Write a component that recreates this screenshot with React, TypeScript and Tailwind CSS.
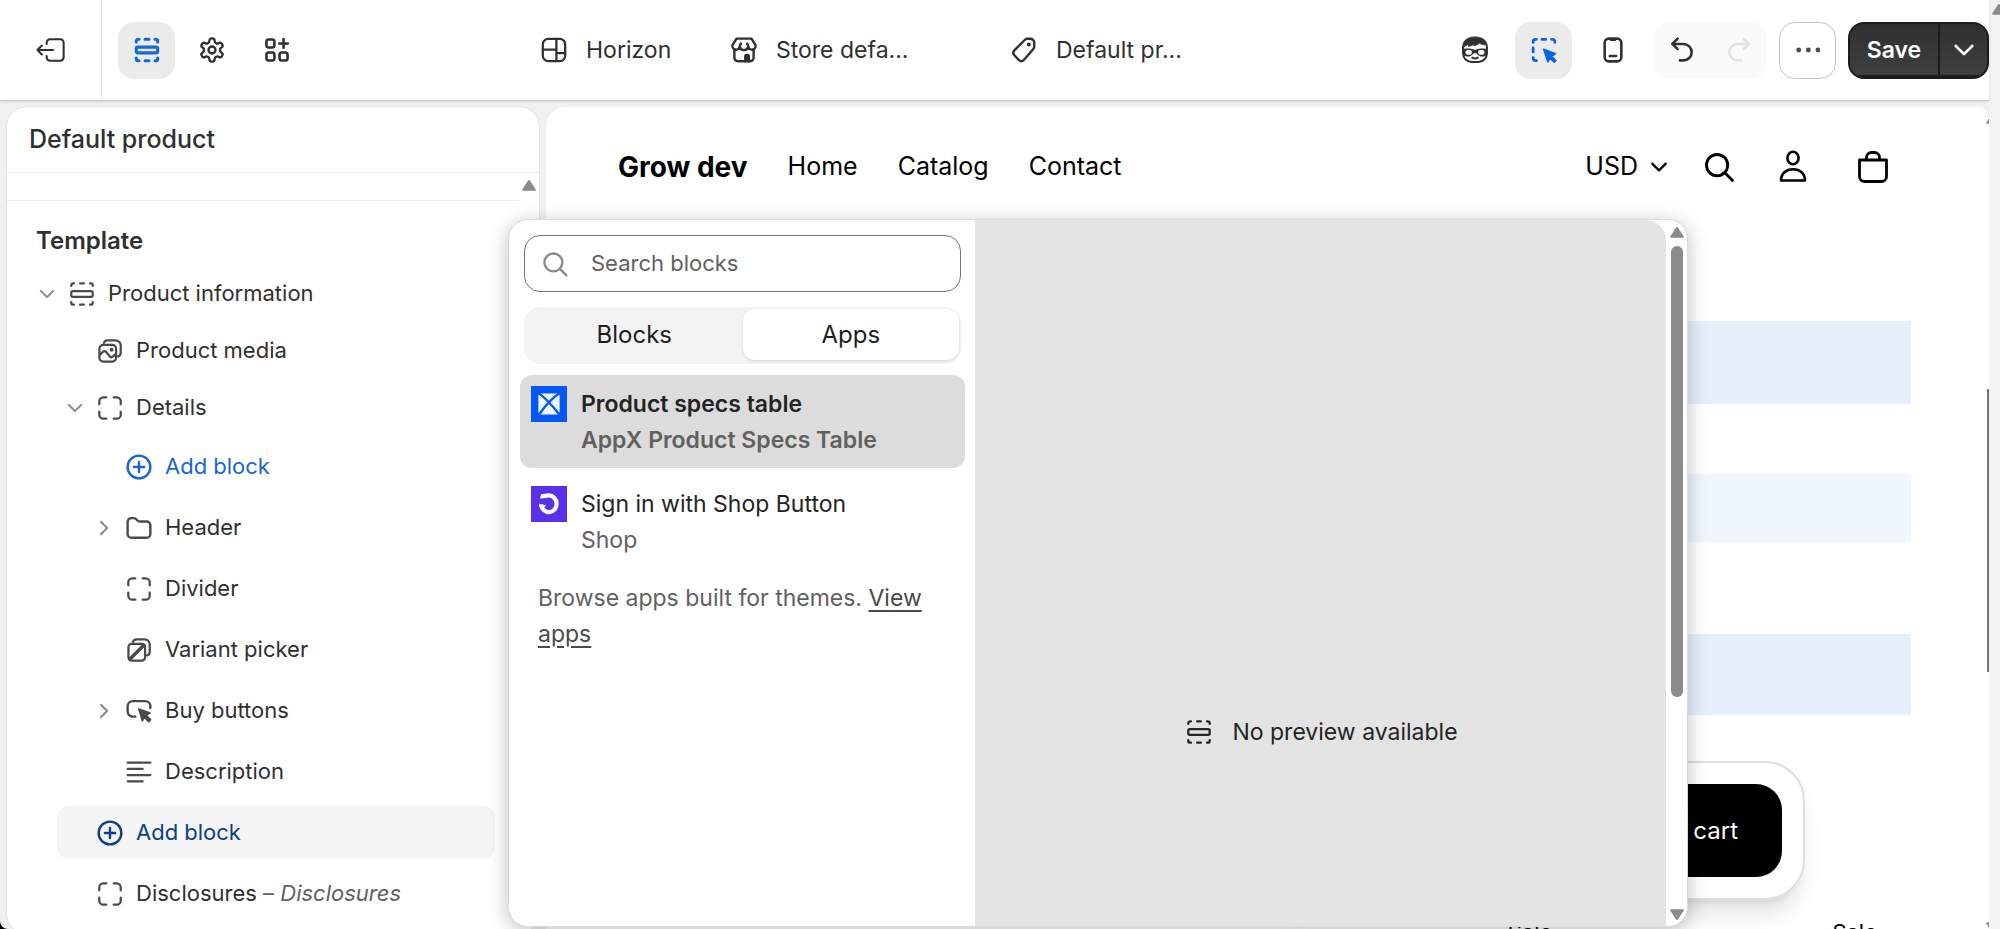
import { ReactNode, useState } from "react"
import clsx from "clsx"

type IconProps = { className?: string, children: ReactNode, width?: number }

function Icon({ className = "size-8", children, width = 1.5 }: IconProps) {
  return <svg viewBox="0 0 20 20" fill="none" stroke="currentColor" strokeWidth={width} strokeLinecap="round" strokeLinejoin="round" aria-hidden="true"
    className={clsx("shrink-0", className)}>{children}</svg>
}

const SectionIcon = ({ className, width }: { className?: string, width?: number }) => <Icon className={className} width={width}>
  <path d="M3.3 5v-.4a1.3 1.3 0 0 1 1.3-1.3H5M8.8 3.3h2.4M15 3.3h.4a1.3 1.3 0 0 1 1.3 1.3V5M3.3 15v.4a1.3 1.3 0 0 0 1.3 1.3H5M8.8 16.7h2.4M15 16.7h.4a1.3 1.3 0 0 0 1.3-1.3V15" />
  <rect x="3.3" y="8.2" width="13.4" height="3.6" rx="1" />
</Icon>

const BlockIcon = () => <Icon width={1.4}>
  <path d="M3.3 7.7V5.8a2.5 2.5 0 0 1 2.5-2.5h1.9M12.3 3.3h1.9a2.5 2.5 0 0 1 2.5 2.5v1.9M16.7 12.3v1.9a2.5 2.5 0 0 1-2.5 2.5h-1.9M7.7 16.7H5.8a2.5 2.5 0 0 1-2.5-2.5v-1.9" />
</Icon>

const PlusIcon = () => <Icon>
  <circle cx="10" cy="10" r="7.1" />
  <path d="M10 6.8v6.4M6.8 10h6.4" />
</Icon>

const MediaIcon = () => <Icon width={1.4}>
  <path d="M6.2 4.9a2.4 2.4 0 0 1 2.2-1.6h5a3.3 3.3 0 0 1 3.3 3.3v4.5c0 1.2-.6 2-1.6 2.3" />
  <rect x="3.4" y="6.2" width="10.4" height="10.4" rx="2.4" />
  <path d="m3.8 12.3 1.8-1.8c.6-.6 1.3-.6 1.8 0l2.6 3c.5.5 1.1.5 1.7 0l1.8-1.5" />
  <circle cx="11" cy="9.2" r=".5" fill="currentColor" />
</Icon>

const VariantIcon = () => <Icon width={1.4}>
  <path d="M6.2 4.9a2.4 2.4 0 0 1 2.2-1.6h5a3.3 3.3 0 0 1 3.3 3.3v4.5c0 1.2-.6 2-1.6 2.3" />
  <rect x="3.4" y="6.2" width="10.4" height="10.4" rx="2" />
  <path d="M4.4 15.6 13 7" strokeWidth="2.2" />
</Icon>

const FolderIcon = () => <Icon>
  <path d="M2.9 6.2A2.4 2.4 0 0 1 5.3 3.8h1.5c.6 0 1.1.2 1.5.7l.7.8c.4.4.9.6 1.4.6h4.3a2.4 2.4 0 0 1 2.4 2.4v5.4a2.4 2.4 0 0 1-2.4 2.4H5.3a2.4 2.4 0 0 1-2.4-2.4z" />
</Icon>

const ButtonIcon = () => <Icon>
  <path d="M7.7 13.5H6.2a3.3 3.3 0 0 1-3.3-3.3V7.1a3.3 3.3 0 0 1 3.3-3.3h7.6a3.3 3.3 0 0 1 3.3 3.3v1" />
  <path d="m9.9 8.7 7 2.5-2.4 1.5 2.8 2.8-1.2 1.2-2.8-2.8-1.2 2.2z" fill="currentColor" strokeWidth="1" />
</Icon>

const TextIcon = () => <Icon width={1.4}>
  <path d="M2.9 4.1h14.2M2.9 8h9.4M2.9 11.9h14.2M2.9 15.8h9.4" />
</Icon>

const Chevron = ({ open, className = "size-6" }: { open: boolean, className?: string }) => <Icon className={className} width={1.7}>
  {open ? <path d="m4.8 7.4 5.2 5.2 5.2-5.2" /> : <path d="m7.4 4.8 5.2 5.2-5.2 5.2" />}
</Icon>

const SearchIcon = ({ className, width }: { className?: string, width?: number }) => <Icon className={className} width={width}>
  <circle cx="9" cy="9" r="5.6" />
  <path d="m13.2 13.2 3.9 3.9" />
</Icon>

const ScrollArrow = ({ down, className }: { down?: boolean, className?: string }) => <svg viewBox="0 0 14 11" fill="#8b8b8b" aria-hidden="true" className={clsx("h-[11px] w-[14px] shrink-0", down && "rotate-180", className)}>
  <path d="M5.9.8a1.4 1.4 0 0 1 2.2 0l5.5 8.4c.5.8 0 1.6-.8 1.6H1.2c-.8 0-1.3-.8-.8-1.6z" />
</svg>

const SpecsLogo = () => <svg viewBox="0 0 36 36" aria-hidden="true" className="size-9 shrink-0">
  <path fill="#0558f5" d="M0 0h36v36H0z" />
  <rect x="7.4" y="7.4" width="21.2" height="21.2" rx="3" fill="#f2f6ff" />
  <path d="M8 7.5c5 3 15 14 20.3 21M28 7.5c-6 4-15 14-20 21" fill="none" stroke="#0558f5" strokeWidth="2.3" />
</svg>

const ShopLogo = () => <svg viewBox="0 0 36 36" aria-hidden="true" className="size-9 shrink-0">
  <path fill="#5a31e8" d="M0 0h36v36H0z" />
  <path d="M9.6 10.2c2.6.6 4.9-.8 8.2-.8a7.7 8.4 0 1 1-7.6 9" fill="none" stroke="#fff" strokeWidth="4.2" />
  <path d="M8.1 17.2c2.2 2 4.4 2.6 7 1.6l-2 3.2-4.6-.8z" fill="#fff" />
</svg>

type Row = {
  label: string
  note?: string
  icon: ReactNode
  level: 0 | 1 | 2
  open?: boolean
  kind?: "add" | "active"
}

const rows: Row[] = [
  { label: "Product information", icon: <SectionIcon width={1.4} />, level: 0, open: true },
  { label: "Product media", icon: <MediaIcon />, level: 1 },
  { label: "Details", icon: <BlockIcon />, level: 1, open: true },
  { label: "Add block", icon: <PlusIcon />, level: 2, kind: "add" },
  { label: "Header", icon: <FolderIcon />, level: 2, open: false },
  { label: "Divider", icon: <BlockIcon />, level: 2 },
  { label: "Variant picker", icon: <VariantIcon />, level: 2 },
  { label: "Buy buttons", icon: <ButtonIcon />, level: 2, open: false },
  { label: "Description", icon: <TextIcon />, level: 2 },
  { label: "Add block", icon: <PlusIcon />, level: 1, kind: "active" },
  { label: "Disclosures", note: "Disclosures", icon: <BlockIcon />, level: 1 },
]

const indents = ["pl-7", "pl-14", "pl-[85px]"]

function TreeRow({ row, index }: { row: Row, index: number }) {
  const active = row.kind === "active"
  return <li className={clsx("flex items-center", index < 3 ? "h-[57px]" : "h-[61px]")}>
    <button type="button" className={clsx(
      "flex h-[53px] flex-1 items-center text-left text-[22px]",
      active ? "ml-[50px] mr-11 rounded-xl bg-[#f5f5f5] pl-[6px] text-[#0b3f8a]" : indents[row.level],
      row.kind === "add" && "text-[#1767cf]",
      !row.kind && "text-[#303030]"
    )}>
      <span className="mr-[7px] flex w-6 text-[#8a8a8a]">{row.open !== undefined && <Chevron open={row.open} />}</span>
      <span className={clsx("mr-[10px]", !row.kind && "text-[#4a4a4a]")}>{row.icon}</span>
      <span>{row.label}{row.note && <span className="text-[#616161]"> – <i>{row.note}</i></span>}</span>
    </button>
  </li>
}

function TopBar() {
  return <header className="relative z-10 flex h-[101px] shrink-0 items-center border-b border-[#cfcfcf] bg-white text-[#303030] shadow-sm">
    <div className="flex h-full w-[102px] shrink-0 items-center justify-center border-r border-[#e6e6e6]">
      <button type="button" aria-label="Exit">
        <Icon width={1.3}>
          <path d="M7.3 6.3v-.9a2.1 2.1 0 0 1 2.1-2.1h6.4a2.1 2.1 0 0 1 2.1 2.1v9.2a2.1 2.1 0 0 1-2.1 2.1H9.4a2.1 2.1 0 0 1-2.1-2.1v-.9" />
          <path d="M11.3 10H1.7M4.3 7.2 1.5 10l2.8 2.8" />
        </Icon>
      </button>
    </div>
    <nav className="flex shrink-0 gap-2 pl-4">
      <button type="button" aria-label="Sections" className="flex size-[57px] items-center justify-center rounded-2xl bg-[#ebebeb] text-[#1268dc]">
        <SectionIcon width={1.9} />
      </button>
      <button type="button" aria-label="Settings" className="flex size-[57px] items-center justify-center">
        <svg viewBox="0 0 24 24" fill="none" stroke="currentColor" strokeWidth="2" aria-hidden="true" className="size-7">
          <path d="M12.22 2h-.44a2 2 0 0 0-2 2v.18a2 2 0 0 1-1 1.73l-.43.25a2 2 0 0 1-2 0l-.15-.08a2 2 0 0 0-2.73.73l-.22.38a2 2 0 0 0 .73 2.73l.15.1a2 2 0 0 1 1 1.72v.51a2 2 0 0 1-1 1.74l-.15.09a2 2 0 0 0-.73 2.73l.22.38a2 2 0 0 0 2.73.73l.15-.08a2 2 0 0 1 2 0l.43.25a2 2 0 0 1 1 1.73V20a2 2 0 0 0 2 2h.44a2 2 0 0 0 2-2v-.18a2 2 0 0 1 1-1.73l.43-.25a2 2 0 0 1 2 0l.15.08a2 2 0 0 0 2.73-.73l.22-.39a2 2 0 0 0-.73-2.73l-.15-.08a2 2 0 0 1-1-1.74v-.5a2 2 0 0 1 1-1.74l.15-.09a2 2 0 0 0 .73-2.73l-.22-.38a2 2 0 0 0-2.73-.73l-.15.08a2 2 0 0 1-2 0l-.43-.25a2 2 0 0 1-1-1.73V4a2 2 0 0 0-2-2z" />
          <circle cx="12" cy="12" r="3" />
        </svg>
      </button>
      <button type="button" aria-label="App embeds" className="flex size-[57px] items-center justify-center">
        <Icon width={1.6}>
          <rect x="3.4" y="3.4" width="5" height="5" rx="1.4" />
          <rect x="3.4" y="11.6" width="5" height="5" rx="1.4" />
          <rect x="11.6" y="11.6" width="5" height="5" rx="1.4" />
          <path d="M14.1 3.2v5.4M11.4 5.9h5.4" />
        </Icon>
      </button>
    </nav>

    <div className="flex flex-1 justify-center text-[23px]">
      <button type="button" className="flex w-[190px] items-center gap-4">
        <Icon width={1.4}>
          <rect x="3" y="3.1" width="14" height="13.8" rx="3.4" />
          <path d="M11.5 3.1v13.8M3 9.7h8.5M11.5 12H17" />
        </Icon>
        Horizon
      </button>
      <button type="button" className="flex w-[280px] items-center gap-4">
        <Icon>
          <path d="M5.3 2.9h9.4L17.2 7a2.3 2.3 0 0 1-4.5 1 2.8 2.8 0 0 1-5.4 0 2.3 2.3 0 0 1-4.5-1z" />
          <path d="M7.3 8 8 6M12.7 8 12 6M4 9.5v5.3A2.1 2.1 0 0 0 6.1 17h7.8a2.1 2.1 0 0 0 2.1-2.2V9.5" />
          <path d="M10.8 17v-3a.9.9 0 0 1 .9-.9h.4a.9.9 0 0 1 .9.9v3" fill="currentColor" />
        </Icon>
        Store defa...
      </button>
      <button type="button" className="flex w-[205px] items-center gap-4">
        <Icon>
          <path d="m10.6 3.6-6.5 6.5c-1 1-1 2.2-.1 3.2l2.7 2.9c1 1 2.200 1 3.200 0l5.900-6.800c.4-.5.6-1 .6-1.6V5.400A2.400 2.400 0 0 0 14 3h-1.800c-.6 0-1.200.2-1.600.6z" />
          <circle cx="13" cy="6.6" r=".5" fill="currentColor" />
        </Icon>
        Default pr...
      </button>
    </div>

    <div className="flex shrink-0 items-center gap-3">
      <button type="button" aria-label="Ask Sidekick" className="flex size-[57px] items-center justify-center">
        <Icon width={1.3}>
          <path d="M2.6 8.5v3.8a5.2 5.2 0 0 0 5.2 5.2h4.4a5.2 5.2 0 0 0 5.2-5.2V8.5" />
          <path d="M2.2 9C2 4 5.3 1.8 10 1.8S18 4 17.8 9l-1.3-2.3c-1.6.2-2.7-.2-3.6-1-1.1.9-2.2 1.4-3.6 1.6l.8-1.4c-1.4 1.2-2.8 1.7-4.3 1.8l.6-1.3C4.7 6.9 3.2 7.6 2.2 9z" fill="currentColor" strokeWidth=".5" />
          <path d="M2.4 9.6c3-.6 5.2-.4 7.6.6 2.4-1 4.6-1.2 7.6-.6v2.9c-1.7 2-5 2-6.6-.7H9c-1.600 2.700-4.900 2.700-6.600.7z" fill="currentColor" strokeWidth=".4" />
          <ellipse cx="6.1" cy="11.4" rx="2" ry="1.6" fill="#fff" stroke="none" />
          <ellipse cx="13.9" cy="11.4" rx="2" ry="1.6" fill="#fff" stroke="none" />
          <path d="M8.3 14.8c1 .6 2.4.6 3.4 0" />
        </Icon>
      </button>
      <button type="button" aria-label="Inspector" className="flex size-[57px] items-center justify-center rounded-2xl bg-[#ebebeb] text-[#0a64e0]">
        <Icon width={1.7}>
          <path d="M3.2 5.3v-.5a1.5 1.5 0 0 1 1.5-1.5h.6M8.7 3.3h2.4M14.7 3.3h.6a1.5 1.5 0 0 1 1.5 1.5v.5M3.2 8.7v2.5M3.2 14.7v.5a1.5 1.5 0 0 0 1.5 1.5h.6" />
          <path d="m9.8 9.5 7.4 2.8-2.5 1.6 2.7 2.7-1 1-2.8-2.7-1.2 2.5z" fill="currentColor" strokeWidth="1" />
        </Icon>
      </button>
      <button type="button" aria-label="Mobile preview" className="flex size-[57px] items-center justify-center">
        <Icon width={1.6}>
          <rect x="4.8" y="2.9" width="10.4" height="14.2" rx="2.5" />
          <path d="M8.6 3.5h2.8M8 13.8h4" />
        </Icon>
      </button>
      <div className="flex rounded-2xl bg-[#fafafa]">
        <button type="button" aria-label="Undo" className="flex size-[57px] items-center justify-center">
          <Icon width={1.6}>
            <path d="M7.3 2.9 3.9 6.2l3.4 3.3M4.2 6.2h6.7a5.1 5.1 0 0 1 0 10.3H8.7" />
          </Icon>
        </button>
        <button type="button" aria-label="Redo" className="flex size-[57px] items-center justify-center text-[#e3e3e3]">
          <Icon width={1.6}>
            <path d="m12.7 2.9 3.4 3.3-3.4 3.3M15.8 6.2H9.1a5.1 5.1 0 0 0 0 10.3h2.2" />
          </Icon>
        </button>
      </div>
      <button type="button" aria-label="More actions" className="flex size-[57px] items-center justify-center rounded-2xl border border-[#c4c4c4]">
        <Icon>
          <g fill="#4a4a4a" stroke="none">
            <circle cx="4.2" cy="10" r="1.5" /><circle cx="10.2" cy="10" r="1.5" /><circle cx="16.2" cy="10" r="1.5" />
          </g>
        </Icon>
      </button>
      <div className="flex h-[57px] overflow-hidden rounded-2xl border-2 border-[#1c1c1c] bg-linear-to-b from-[#303030] to-[#404040] text-white">
        <button type="button" className="w-[90px] border-r-2 border-[#1c1c1c] text-[23px] font-semibold shadow-[inset_0_-2px_0_#1c1c1c]">Save</button>
        <button type="button" aria-label="Save options" className="flex w-[47px] items-center justify-center shadow-[inset_0_-2px_0_#1c1c1c]"><Chevron open className="size-8" /></button>
      </div>
    </div>
  </header>
}

function Sidebar() {
  return <aside className="-mb-1 flex w-[532px] shrink-0 flex-col overflow-hidden rounded-[20px] bg-white ring-1 ring-[#e6e6e6]">
    <h1 className="flex h-[66px] shrink-0 items-center border-b border-[#ededed] pl-[22px] text-[25px] font-medium text-[#303030]">Default product</h1>
    <div className="flex h-7 shrink-0">
      <div className="flex-1 border-b border-[#ededed]" />
      <ScrollArrow className="mx-[3px] mt-[7px]" />
    </div>
    <h2 className="shrink-0 pt-6 pb-2 pl-[29px] text-2xl font-semibold text-[#303030]">Template</h2>
    <ul>
      {rows.map((row, i) => <TreeRow key={i} row={row} index={i} />)}
    </ul>
  </aside>
}

function Preview() {
  return <main className="relative flex min-w-0 flex-1 flex-col overflow-hidden rounded-tl-[20px] rounded-tr-xl bg-white text-black">
    <div className="flex h-[119px] shrink-0 items-center pr-[97px] pl-[72px] text-[25px]">
      <a href="#" className="mr-10 text-[28px] font-bold">Grow dev</a>
      <nav className="flex flex-1 gap-10">
        <a href="#">Home</a>
        <a href="#">Catalog</a>
        <a href="#">Contact</a>
      </nav>
      <button type="button" className="flex items-center gap-2">USD <Chevron open className="size-[26px]" /></button>
      <button type="button" aria-label="Search" className="ml-7"><SearchIcon className="size-[38px]" width={1.5} /></button>
      <button type="button" aria-label="Account" className="ml-9">
        <svg viewBox="0 0 38 38" fill="none" stroke="currentColor" strokeWidth="2.6" aria-hidden="true" className="size-[38px]">
          <ellipse cx="19" cy="10" rx="5.6" ry="6.2" />
          <path d="M7 32.5c0-7 5-11.300 12-11.300s12 4.300 12 11.300z" strokeLinejoin="round" />
        </svg>
      </button>
      <button type="button" aria-label="Cart" className="ml-[42px]">
        <svg viewBox="0 0 38 38" fill="none" stroke="currentColor" strokeWidth="2.8" strokeLinejoin="round" aria-hidden="true" className="size-[38px]">
          <path d="M5.5 12h27v16.500a5 5 0 0 1-5 5h-17a5 5 0 0 1-5-5zM12.500 12V9.500a5 5 0 0 1 5-5h3a5 5 0 0 1 5 5V12" />
        </svg>
      </button>
    </div>

    <div className="mt-[95px] ml-auto flex w-1/2 flex-col pr-[78px]">
      <div className="h-[83px] bg-[#e6f0fd]" />
      <div className="mt-[70px] h-[68px] bg-[#eff6fe]" />
      <div className="mt-[92px] h-[81px] bg-[#e6f0fd]" />
      <div className="mt-[46px] mr-[106px] rounded-[40px] border-2 border-[#dedede] p-[21px] shadow-xl">
        <button type="button" className="flex h-[93px] w-full items-center justify-end rounded-[26px] bg-black pr-11 text-2xl text-white">Add to cart</button>
      </div>
    </div>
    <div className="mt-4 flex justify-end gap-[280px] pr-28 text-[22px] leading-8">
      <span>Sale</span>
      <span>Sale</span>
    </div>

    <ScrollArrow className="absolute top-[6px] -right-[11px]" />
    <div className="absolute top-[282px] right-0 h-[283px] w-[2px] bg-[#757575]" />
    <ScrollArrow down className="absolute -right-[11px] -bottom-1" />
  </main>
}

const apps = [
  { name: "Product specs table", vendor: "AppX Product Specs Table", logo: <SpecsLogo /> },
  { name: "Sign in with Shop Button", vendor: "Shop", logo: <ShopLogo /> },
]

function BlockPicker() {
  const [tab, setTab] = useState("Apps")
  const [selected, setSelected] = useState(0)

  return <div role="dialog" aria-label="Add block" className="absolute top-[219px] right-[301px] bottom-[2px] left-[508px] z-20 flex overflow-hidden rounded-[20px] border border-[#dcdcdc] bg-white shadow-[0_4px_20px_rgba(0,0,0,0.25)]">
    <div className="w-[466px] shrink-0 pt-[15px] pr-[10px] pl-[11px]">
      <div className="mx-1 flex h-[57px] items-center rounded-2xl border border-[#777] pl-[14px]">
        <label htmlFor="search"><SearchIcon className="size-8 text-[#8a8a8a]" /></label>
        <input id="search" type="text" aria-label="Search blocks" placeholder="Search blocks" className="ml-5 min-w-0 flex-1 text-[22px] outline-none placeholder:text-[#616161]" />
      </div>

      <div className="mx-1 mt-[15px] flex h-[57px] rounded-2xl bg-[#f3f3f3] p-[2px] text-2xl text-[#1f1f1f]">
        {["Blocks", "Apps"].map(name => <button key={name} type="button" onClick={() => setTab(name)}
          className={clsx("mb-[2px] flex-1 rounded-xl", tab === name && "bg-white shadow")}>{name}</button>)}
      </div>

      <ul className="mt-[11px] flex flex-col gap-[7px]">
        {apps.map((app, i) => <li key={app.name}>
          <button type="button" onClick={() => setSelected(i)}
            className={clsx("flex h-[93px] w-full gap-[14px] rounded-xl pt-[11px] pl-[11px] text-left text-[23px] leading-9 text-[#242424]", selected === i && "bg-[#dcdcdc] font-semibold")}>
            {app.logo}
            <span>
              {app.name}<br />
              <span className="text-[#616161]">{app.vendor}</span>
            </span>
          </button>
        </li>)}
      </ul>

      <p className="mt-3 pl-[18px] text-[23px] leading-9 text-[#616161]">
        Browse apps built for themes. <a href="#" className="text-[#4a4a4a] underline underline-offset-4">View apps</a>
      </p>
    </div>

    <div className="min-w-0 flex-1 overflow-hidden rounded-tr-[20px] bg-[#e3e3e3]">
      <div className="flex h-[1024px] items-center justify-center gap-[17px] text-[23px] text-[#242424]">
        <SectionIcon width={1.4} />
        No preview available
      </div>
    </div>

    <div className="flex w-[21px] shrink-0 flex-col items-center pt-[7px] pb-[6px]">
      <ScrollArrow />
      <div className="mt-2 w-3 basis-[451px] rounded-full bg-[#8b8b8b]" />
      <ScrollArrow down className="mt-auto" />
    </div>
  </div>
}

export default function App() {
  return <div className="h-screen overflow-hidden bg-black font-['Inter',sans-serif]">
    <div className="flex h-full overflow-hidden rounded-bl-lg bg-[#f1f1f1]">
      <div className="relative flex min-w-0 flex-1 flex-col">
        <TopBar />
        <div className="flex min-h-0 flex-1 gap-[7px] pt-[6px] pl-[7px]">
          <Sidebar />
          <Preview />
        </div>
        <BlockPicker />
      </div>
      <div className="w-[11px] shrink-0 overflow-hidden bg-[#f3f3f3] pt-1">
        <ScrollArrow className="ml-[3px]" />
      </div>
    </div>
  </div>
}
